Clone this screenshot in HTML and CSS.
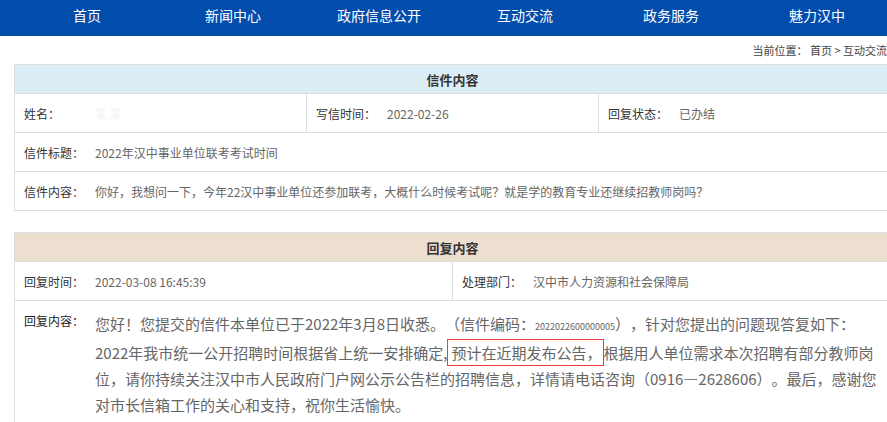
FILE: index.html
```html
<!DOCTYPE html>
<html lang="zh-CN">

<head>
    <meta charset="UTF-8">
    <meta name="viewport" content="width=device-width, initial-scale=1.0">
    <title>互动交流 - 信件内容</title>
    <link rel="stylesheet" href="styles.css">
</head>

<body>
    <div class="nav">
        <ul class="nav-list">
            <li><a href="#">首页</a></li>
            <li><a href="#">新闻中心</a></li>
            <li><a href="#">政府信息公开</a></li>
            <li><a href="#">互动交流</a></li>
            <li><a href="#">政务服务</a></li>
            <li><a href="#">魅力汉中</a></li>
        </ul>
    </div>

    <div class="main">
        <div class="crumb">当前位置： <a href="#">首页</a> &gt; <a href="#">互动交流</a></div>

        <table class="box letter">
            <tr>
                <th colspan="3" class="head">信件内容</th>
            </tr>
            <tr>
                <td><span class="lab">姓名：</span><span class="val blur">某 某</span></td>
                <td><span class="lab">写信时间：</span><span class="val">2022-02-26</span></td>
                <td><span class="lab">回复状态：</span><span class="val">已办结</span></td>
            </tr>
            <tr>
                <td colspan="3"><span class="lab">信件标题：</span><span class="val">2022年汉中事业单位联考考试时间</span></td>
            </tr>
            <tr>
                <td colspan="3"><span class="lab">信件内容：</span><span class="val">你好，我想问一下，今年22汉中事业单位还参加联考，大概什么时候考试呢？就是学的教育专业还继续招教师岗吗？</span></td>
            </tr>
        </table>

        <table class="box reply">
            <tr>
                <th colspan="2" class="head">回复内容</th>
            </tr>
            <tr>
                <td class="c1"><span class="lab">回复时间：</span><span class="val">2022-03-08 16:45:39</span></td>
                <td><span class="lab">处理部门：</span><span class="val">汉中市人力资源和社会保障局</span></td>
            </tr>
            <tr>
                <td colspan="2" class="content">
                    <div class="row">
                        <div class="lab2">回复内容：</div>
                        <div class="txt">您好！您提交的信件本单位已于2022年3月8日收悉。（信件编码：<span class="code">2022022600000005</span>），针对您提出的问题现答复如下：2022年我市统一公开招聘时间根据省上统一安排确定,<span class="mark">预计在近期发布公告，</span>根据用人单位需求本次招聘有部分教师岗位，请你持续关注汉中市人民政府门户网公示公告栏的招聘信息，详情请电话咨询（0916—2628606）。最后，感谢您对市长信箱工作的关心和支持，祝你生活愉快。</div>
                    </div>
                </td>
            </tr>
        </table>
    </div>
</body>

</html>
```

FILE: styles.css
```css
body {
    margin: 0;
    font-family: "Noto Sans CJK SC", "Microsoft YaHei", sans-serif;
    color: #333;
    background-color: white;
    overflow-x: hidden;
    text-spacing-trim: space-all;
}

a {
    color: inherit;
    text-decoration: none;
}

.nav {
    background-color: #034dad;
    height: 36px;
}

.nav-list {
    list-style: none;
    margin: 0;
    padding: 0 0 0 14px;
    display: flex;
    width: 876px;
}

.nav-list li {
    width: 146px;
    flex-shrink: 0;
    text-align: center;
    line-height: 31px;
    font-size: 14px;
}

.nav-list a {
    color: white;
}

.main {
    width: 877px;
    margin-left: 14px;
}

.crumb {
    height: 28px;
    line-height: 28px;
    font-size: 11px;
    text-align: right;
    padding-right: 4px;
    color: #444;
}

.box {
    width: 877px;
    border-collapse: collapse;
    table-layout: fixed;
    font-size: 12px;
}

.box th,
.box td {
    border: 1px solid #dddddd;
    padding: 0 0 0 9px;
    text-align: left;
    white-space: nowrap;
}

.box td {
    height: 38px;
}

.box .head {
    height: 28px;
    text-align: center;
    font-size: 13px;
    font-weight: bold;
    color: #333;
    padding: 0;
}

.letter .head {
    background-color: #dcedf5;
}

.reply {
    margin-top: 21px;
}

.reply .head {
    background-color: #ecdfd0;
}

.reply .c1 {
    width: 428px;
}

.lab {
    display: inline-block;
    width: 71px;
    color: #333;
}

.val {
    color: #666;
}

.blur {
    color: #f3f3f3;
}

.box td.content {
    height: auto;
    white-space: normal;
    padding: 0;
    vertical-align: top;
}

.row {
    display: flex;
    padding: 10px 0 12px 9px;
}

.lab2 {
    width: 71px;
    flex-shrink: 0;
    font-size: 12px;
    line-height: 16px;
    padding-top: 2px;
    color: #222;
}

.txt {
    width: 785px;
    font-size: 15px;
    line-height: 26px;
    color: #666;
}

.code {
    font-size: 9px;
}

.mark {
    border: 1px solid #f03c3c;
    padding: 2px 1px 2px 3px;
}
```
